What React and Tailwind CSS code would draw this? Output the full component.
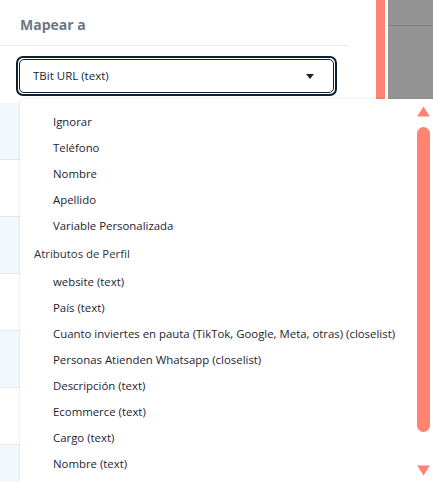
import React from 'react';

const options = ['Ignorar', 'Teléfono', 'Nombre', 'Apellido', 'Variable Personalizada'];
const profileAttrs = [
  'website (text)',
  'País (text)',
  'Cuanto inviertes en pauta (TikTok, Google, Meta, otras) (closelist)',
  'Personas Atienden Whatsapp (closelist)',
  'Descripción (text)',
  'Ecommerce (text)',
  'Cargo (text)',
  'Nombre (text)',
];

const ScrollArrow = ({ up }) => (
  <svg width="13" height="11" viewBox="0 0 13 11" className="block">
    {up ? (
      <path d="M6.5 0.5 L12.8 10.5 L0.2 10.5 Z" fill="#ff8272" />
    ) : (
      <path d="M0.2 0.5 L12.8 0.5 L6.5 10.5 Z" fill="#ff8272" />
    )}
  </svg>
);

export default function App() {
  const rows = [0, 1, 2, 3, 4, 5, 6];

  return (
    <div className="relative w-[433px] h-[482px] overflow-hidden bg-white flex items-start" style={{ fontFamily: '"Open Sans", "Noto Sans", sans-serif' }}>
      {/* left panel */}
      <div className="w-[376px] shrink-0 flex flex-col">
        <div className="h-[46px] shrink-0 w-[349px] border-b border-[#ececec] flex items-center pl-[20px] pt-[3px]">
          <span className="text-[14px] font-bold text-[#6c7785]">Mapear a</span>
        </div>
        <div className="pl-[16px] pt-[10px] h-[57px] shrink-0">
          <div className="w-[321px] h-[40px] rounded-[7px] border-2 border-[#0e2132] p-[1px]">
            <div className="h-full rounded-[5px] border border-[#0e2132] flex items-center justify-between pl-[13px] pr-[19px]">
              <span className="text-[11.5px] text-[#14263a]">TBit URL (text)</span>
              <svg width="8" height="5" viewBox="0 0 8 5"><path d="M0 0 H8 L4 5 Z" fill="#14263a" /></svg>
            </div>
          </div>
        </div>
        <div className="flex flex-col">
          {rows.map((r) => (
            <div key={r} className={`h-[57px] shrink-0 border-b border-[#e4ebf3] ${r % 2 === 0 ? 'bg-[#f3f8fe]' : 'bg-white'}`} />
          ))}
        </div>
      </div>
      <div className="w-[9px] h-[100px] shrink-0 bg-[#ff8272]" />
      <div className="w-[3px] shrink-0" />
      <div className="flex-1 h-[100px] bg-[#949494] flex flex-col">
        <div className="h-[26px] border-b border-[#7f7f7f]" />
      </div>

      {/* dropdown overlay */}
      <div className="absolute left-[20px] top-[99px] right-0 bottom-0 bg-white rounded-tl-[5px] shadow-[0_0_3px_rgba(0,0,0,0.12)] flex">
        <div className="flex-1 flex flex-col pt-[10px] text-[11.4px] text-[#1c2430] leading-[26px]">
          {options.map((o) => (
            <div key={o} className="pl-[33px] h-[26px]">{o}</div>
          ))}
          <div className="pl-[14px] h-[28px] pt-[2px] text-[#2a3340]">Atributos de Perfil</div>
          <div className="h-[2px]" />
          {profileAttrs.map((o) => (
            <div key={o} className="pl-[33px] h-[26px] whitespace-nowrap">{o}</div>
          ))}
        </div>
        <div className="w-[15px] mr-[2px] flex flex-col items-center pt-[7px] pb-[6px]">
          <ScrollArrow up />
          <div className="w-[13px] mt-[10px] h-[305px] rounded-full bg-[#ff8272]" />
          <div className="flex-1" />
          <ScrollArrow />
        </div>
      </div>
    </div>
  );
}
